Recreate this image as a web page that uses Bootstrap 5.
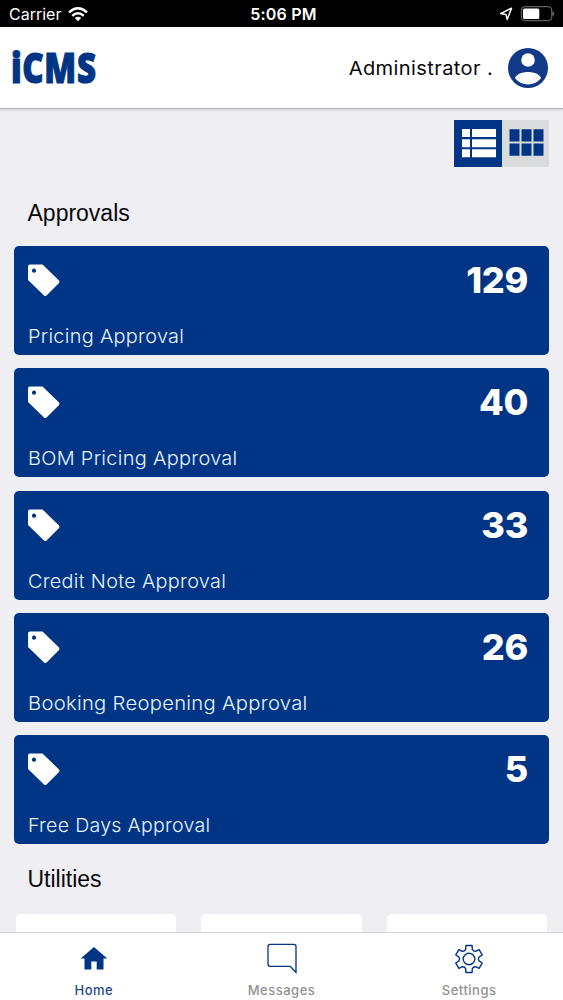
<!DOCTYPE html>
<html lang="en">
<head>
<meta charset="utf-8">
<meta name="viewport" content="width=device-width, initial-scale=1">
<title>iCMS</title>
<link href="https://cdn.jsdelivr.net/npm/bootstrap@5.3.0/dist/css/bootstrap.min.css" rel="stylesheet">
<style>
:root{--brand:#003585}
body{font-family:Inter,"Liberation Sans",sans-serif;background:#efeef3;color:#08080a}
.phone{height:1000px;overflow:hidden}
svg{display:block;flex:none}
.status{height:27px;background:#000;color:#fff;font-size:16px;line-height:27px;padding:1px 9px 0}
.status>div{flex:1 1 0}
.carrier{letter-spacing:0}
.clock{font-weight:600;letter-spacing:.2px;position:relative;left:2px}
.topbar{height:82px;border-bottom:1px solid #b3b3b5;box-shadow:0 1px 2px #0002;padding:0 15px 0 11px}
.brand{font:800 42px/1 "Open Sans",sans-serif;color:var(--brand);-webkit-text-stroke:1.2px var(--brand);letter-spacing:.8px;padding-bottom:2px;transform:scaleX(.785);transform-origin:0 50%}
.user{font-size:18.5px;letter-spacing:.35px;margin-right:15px;padding-top:2px;transform:scaleX(1.085);transform-origin:100% 50%}
.switcher{padding:11px 14px 0}
.switcher button{width:47.5px;height:47px;border:0;padding:0;background:#dadbdd;overflow:hidden}
.switcher button.on{background:var(--brand)}
.heading{font:23px/28px "Liberation Sans",sans-serif;padding-left:27.5px}
.tiles{padding:0 14px;gap:13.25px}
.tile{height:109px;border:0;border-radius:5px;background:var(--brand);color:#fff;padding:18px 21px 5px 14px}
.tile svg{margin-left:-1px}
.tile .count{font-weight:800;font-size:36px;line-height:32px;letter-spacing:-.3px}
.tile .label{font-size:19px;line-height:26px;font-weight:300;letter-spacing:.28px;color:#e6f3ff;white-space:nowrap;transform-origin:0 50%}
.utils{padding:0 16px;gap:25px}
.utils>div{height:40px;border-radius:5px}
.tabs{height:68px;border-top:1px solid #d2d1d5;z-index:2}
.tabs a{color:#929294;font-size:13px;line-height:16px;text-decoration:none;letter-spacing:.5px;font-weight:500}
.tabs a.active{color:#234a91}
.tabs svg{height:32px;width:34px;margin:9px 0 8px;color:var(--brand)}
</style>
</head>
<body>
<div class="phone d-flex flex-column">
  <div class="status d-flex flex-shrink-0">
    <div class="d-flex align-items-center carrier">Carrier
      <svg width="20" height="15" viewBox="0 0 20 15" style="margin-left:7px" fill="none" stroke="#fff" stroke-width="2.4"><path d="M1 5.3Q10-2.7 19 5.3M4.2 8.8Q10 3.7 15.8 8.8"/><path d="M6.8 11.1Q10 8.3 13.2 11.1L10 14.3Z" fill="#fff" stroke="none"/></svg>
    </div>
    <div class="text-center"><span class="clock">5:06 PM</span></div>
    <div class="d-flex align-items-center justify-content-end">
      <svg width="56" height="16" viewBox="0 0 56 16"><path d="M2.7 7.6 13.5 2.2 9.2 13.4 7.9 8.4Z" fill="none" stroke="#fff" stroke-width="1.5" stroke-linejoin="round"/><rect x="23.3" y=".7" width="30.5" height="14" rx="3.5" fill="none" stroke="#777"/><rect x="25" y="2.5" width="16.3" height="10.5" rx="1.5" fill="#fff"/><path d="M55 6q1.2 1.7 0 3.4Z" fill="#777" stroke="#777"/></svg>
    </div>
  </div>
  <header class="topbar bg-white d-flex align-items-center justify-content-between flex-shrink-0">
    <div class="brand">iCMS</div>
    <div class="d-flex align-items-center"><span class="user">Administrator .</span>
      <svg width="40" height="40" viewBox="0 0 40 40"><circle cx="20" cy="20" r="20" fill="#103a87"/><circle cx="20" cy="12" r="6.8" fill="#fff"/><path d="M7 30C10 22 30 22 33 30 27 38.5 13 38.5 7 30Z" fill="#fff"/></svg>
    </div>
  </header>
  <div class="switcher d-flex justify-content-end flex-shrink-0">
    <button class="on" aria-label="List view"><svg width="48" height="47" fill="#fff"><path d="M8 9h8v8H8zM18 9h24v8H18zM8 19.3h8v8H8zM18 19.3h24v8H18zM8 29.3h8v8H8zM18 29.3h24v8H18z"/></svg></button>
    <button aria-label="Grid view"><svg width="48" height="47" fill="#003585"><path d="M7.5 9.2h10v12.4h-10zM19.5 9.2h10v12.4h-10zM31.5 9.2h10v12.4h-10zM7.5 23.4h10v12.4h-10zM19.5 23.4h10v12.4h-10zM31.5 23.4h10v12.4h-10z"/></svg></button>
  </div>
  <h2 class="heading flex-shrink-0" style="margin:32px 0 19px">Approvals</h2>
  <div class="tiles d-flex flex-column flex-shrink-0" id="tiles"></div>
  <h2 class="heading flex-shrink-0" style="margin:21px 0 21px">Utilities</h2>
  <div class="utils d-flex flex-fill overflow-hidden"><div class="bg-white flex-fill"></div><div class="bg-white flex-fill"></div><div class="bg-white flex-fill"></div></div>
  <nav class="tabs bg-white row g-0 text-center flex-shrink-0">
    <a class="col active d-flex flex-column align-items-center" href="#"><svg viewBox="0 0 34 32" fill="currentColor"><path d="M17 5 30.3 16.5H26.5V27.5H19.7V19.5H14.3V27.5H7.5V16.5H3.7Z"/></svg>Home</a>
    <a class="col d-flex flex-column align-items-center" href="#"><svg viewBox="0 0 34 32" fill="none" stroke="currentColor" stroke-width="1.3"><path d="M31 30.3V4.5Q31 2.3 28.8 2.3H5.2Q3 2.3 3 4.5V22Q3 24.3 5.2 24.3H25.2Z"/></svg>Messages</a>
    <a class="col d-flex flex-column align-items-center" href="#"><svg viewBox="0 0 34 32" fill="none" stroke="currentColor" stroke-width="1.4" stroke-linejoin="round"><path id="gear"/><circle cx="17" cy="17" r="5.8"/></svg>Settings</a>
  </nav>
</div>
<script>
// label, count, horizontal stretch of the label
[["Pricing Approval",129,1.047],["BOM Pricing Approval",40,1.05],["Credit Note Approval",33,1.044],["Booking Reopening Approval",26,1.063],["Free Days Approval",5,1.029]].forEach(([t,n,s])=>{
  document.getElementById("tiles").insertAdjacentHTML("beforeend",
  `<div class="tile card d-flex flex-column justify-content-between"><div class="d-flex justify-content-between align-items-start"><svg width="34" height="33" viewBox="0 0 34 33"><path fill="#fff" fill-rule="evenodd" d="M3 .5H15.5L32 16.5Q33 17.8 32 19L19.5 31.5Q18.3 32.5 17 31.5L1 16V2.5Q1 .5 3 .5ZM7 4.6a2.1 2.1 0 1 0 .01 0Z"/></svg><span class="count">${n}</span></div><span class="label" style="transform:scaleX(${s})">${t}</span></div>`);
});
// six-toothed gear outline with rounded valleys
let d="";
for(let i=0;i<6;i++){
  const at=(a,r)=>{const q=(i*60-90+a)*Math.PI/180;return (17+r*Math.cos(q)).toFixed(2)+" "+(17+r*Math.sin(q)).toFixed(2)};
  d+=(i?"L":"M")+at(-19,10.2)+"L"+at(-13,13.8)+"L"+at(13,13.8)+"L"+at(19,10.2)+"Q"+at(30,8.7)+" "+at(41,10.2);
}
document.getElementById("gear").setAttribute("d",d+"Z");
</script>
<script src="https://cdn.jsdelivr.net/npm/bootstrap@5.3.0/dist/js/bootstrap.bundle.min.js"></script>
</body>
</html>
